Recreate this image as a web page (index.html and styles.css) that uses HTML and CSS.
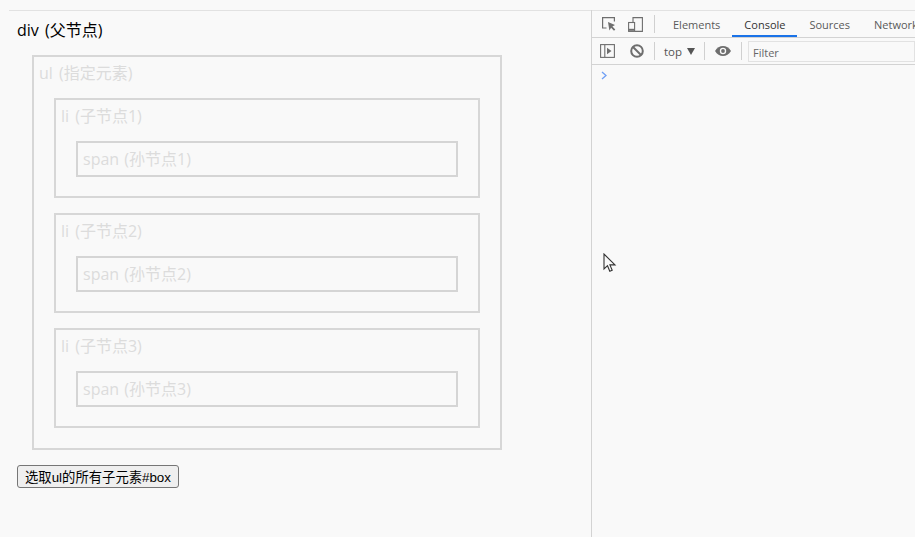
FILE: index.html
```html
<!DOCTYPE html>
<html lang="zh">
<head>
<meta charset="utf-8">
<title>div</title>
<link rel="stylesheet" href="styles.css">
</head>
<body>
<div class="page">
  <main class="demo">
    <div class="parent">
      <p class="parent-label">div (父节点)</p>
      <div class="list">
        <p class="dim-label">ul (指定元素)</p>
        <div class="item">
          <p class="dim-label">li (子节点1)</p>
          <span class="leaf">span (孙节点1)</span>
        </div>
        <div class="item">
          <p class="dim-label">li (子节点2)</p>
          <span class="leaf">span (孙节点2)</span>
        </div>
        <div class="item">
          <p class="dim-label">li (子节点3)</p>
          <span class="leaf">span (孙节点3)</span>
        </div>
      </div>
    </div>
    <button class="action" type="button">选取ul的所有子元素#box</button>
  </main>
  <aside class="devtools">
    <div class="tabs">
      <svg class="icon" width="14" height="14" viewBox="0 0 14 14" fill="none" stroke="#6e6e6e" stroke-width="1.200"><path d="M4.500 11H.6V.6h11.800v4"/><path d="M6 5l1.400 8.500 1.700-2.700 2.900 3 1.300-1.300-2.900-2.900 2.600-1.500z" fill="#6e6e6e" stroke="none"/></svg>
      <svg class="icon device" width="15" height="15" viewBox="0 0 15 15" fill="none" stroke="#6e6e6e" stroke-width="1.100"><path d="M5 5V.6h9.400v13.800H7"/><rect x=".6" y="5.500" width="6" height="8.900"/><path d="M.6 12.800h6" stroke-width="2"/></svg>
      <span class="sep"></span>
      <span class="tab">Elements</span>
      <span class="tab active">Console</span>
      <span class="tab">Sources</span>
      <span class="tab">Network</span>
    </div>
    <div class="filters">
      <svg class="icon sidebar" width="15" height="14" viewBox="0 0 15 14" fill="none" stroke="#6e6e6e" stroke-width="1.100"><rect x=".6" y=".6" width="13.800" height="12.800"/><path d="M4.800 1v12"/><path d="M7 3.800l4.500 3.200-4.500 3.200z" fill="#6e6e6e" stroke="none"/></svg>
      <svg class="icon clear" width="14" height="14" viewBox="0 0 14 14" fill="none" stroke="#6e6e6e" stroke-width="2"><circle cx="7" cy="7" r="5.800"/><path d="M3 3l8 8"/></svg>
      <span class="sep sep-a"></span>
      <span class="context">top<i class="caret"></i></span>
      <span class="sep sep-b"></span>
      <svg class="icon eye" width="16" height="10" viewBox="0 0 16 10"><path d="M0 5c2-3.200 4.800-5 8-5s6 1.800 8 5c-2 3.200-4.800 5-8 5S2 8.200 0 5z" fill="#6e6e6e"/><circle cx="8" cy="5" r="3.200" fill="#f9f9f9"/><circle cx="8" cy="5" r="1.900" fill="#6e6e6e"/></svg>
      <span class="sep sep-c"></span>
      <span class="filter-box">Filter</span>
    </div>
    <div class="prompt">
      <svg width="7" height="9" viewBox="0 0 7 9" fill="none" stroke="#6f9ff5" stroke-width="1.300"><path d="M1 1l4 3.500-4 3.500"/></svg>
    </div>
    <svg class="cursor" width="14" height="21" viewBox="0 0 14 21"><path d="M1 1v15l3.500-3.300 2.300 5.500 2.400-1-2.300-5.300H12z" fill="#f9f9f9" stroke="#333" stroke-width="1.100"/></svg>
  </aside>
</div>
</body>
</html>
```
FILE: styles.css
```css
* { box-sizing: border-box; }
html, body { margin: 0; height: 100%; }
body {
  background: #f9f9f9;
  overflow: hidden;
  font-family: "Noto Sans CJK SC", "Open Sans", sans-serif;
}
p { margin: 0; }

.page { display: flex; height: 537px; padding-top: 10px; }

.demo {
  width: 592px;
  border-right: 1px solid #d3d3d3;
  padding-left: 9px;
  flex: none;
}
.parent {
  border-top: 1px solid #e2e2e2;
  padding: 0 0 0 8px;
}
.parent-label {
  font-size: 16px;
  line-height: 22px;
  height: 44px;
  padding-top: 8px;
  color: #000;
  word-spacing: 2px;
  font-family: "Open Sans", "Noto Sans CJK SC", sans-serif;
}
.list {
  width: 470px;
  margin-left: 15px;
  height: 395px;
  border: 2px solid #d7d7d7;
  padding: 5px 20px 0;
}
.dim-label {
  font-size: 16px;
  line-height: 22px;
  color: #dcdcdc;
  word-spacing: 2px;
  font-family: "Open Sans", "Noto Sans CJK SC", sans-serif;
  white-space: nowrap;
}
.list > .dim-label { margin-left: -15px; height: 36px; }
.item {
  height: 100px;
  width: 426px;
  border: 2px solid #d7d7d7;
  padding: 5px 20px 0 5px;
  margin-bottom: 15px;
}
.item .dim-label { height: 36px; }
.leaf {
  display: block;
  width: 382px;
  height: 36px;
  margin-left: 15px;
  border: 2px solid #d5d5d5;
  padding-left: 5px;
  font-size: 16px;
  line-height: 32px;
  color: #dcdcdc;
  word-spacing: 1px;
  font-family: "Open Sans", "Noto Sans CJK SC", sans-serif;
}
.action {
  display: block;
  width: 162px;
  height: 23px;
  margin: 15px 0 0 8px;
  padding: 0;
  background: #efefef;
  border: 1px solid #767676;
  border-radius: 3px;
  font-family: "Liberation Sans", "Noto Sans CJK SC", sans-serif;
  font-size: 13.33px;
  color: #000;
  white-space: nowrap;
}

.devtools { flex: 1; min-width: 0; position: relative; border-top: 1px solid #e2e2e2; overflow: hidden; }
.icon { flex: none; }
.tabs {
  display: flex;
  align-items: center;
  height: 27px;
  border-bottom: 1px solid #d3d3d3;
  padding-left: 10px;
  white-space: nowrap;
}
.device { margin-left: 12px; }
.sep { width: 1px; height: 18px; background: #d0d0d0; flex: none; }
.tabs .sep { margin: 0 6px 0 11px; }
.tab {
  font: 11px "Open Sans", sans-serif;
  color: #5a5a5a;
  height: 26px;
  line-height: 27px;
  padding: 0 12px;
  flex: none;
}
.tab.active { color: #333; box-shadow: inset 0 -2px 0 #1a73e8; }
.filters {
  display: flex;
  align-items: center;
  height: 27px;
  border-bottom: 1px solid #d3d3d3;
  padding-left: 8px;
}
.clear { margin-left: 15px; }
.sep-a { margin: 0 9px 0 10px; }
.sep-b { margin: 0 10px 0 9px; }
.sep-c { margin: 0 6px 0 10px; }
.context {
  display: flex;
  align-items: center;
  width: 31px;
  font: 11.500px "Open Sans", sans-serif;
  color: #555;
}
.caret {
  margin-left: 5px;
  border-left: 4px solid transparent;
  border-right: 4px solid transparent;
  border-top: 7px solid #555;
}
.filter-box {
  flex: 1;
  height: 21px;
  border: 1px solid #e2e2e2;
  padding-left: 4px;
  font: 11px/21px "Open Sans", sans-serif;
  color: #666;
}
.prompt { padding: 6px 0 0 9px; line-height: 0; }
.cursor { position: absolute; left: 11px; top: 242px; }
```
